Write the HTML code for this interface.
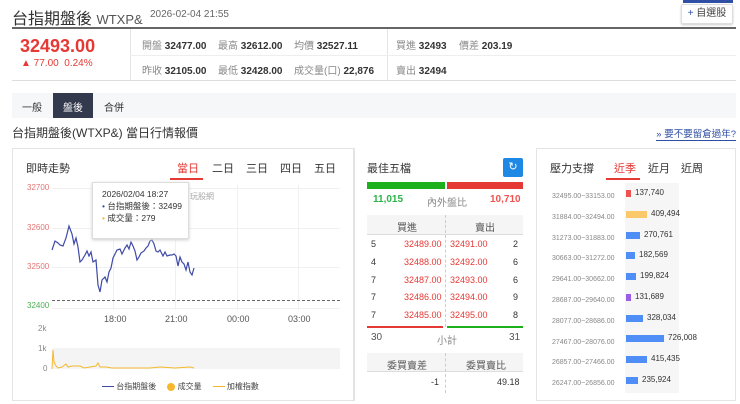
<!DOCTYPE html>
<html><head><meta charset="utf-8">
<style>
*{margin:0;padding:0;box-sizing:border-box}
body{width:740px;height:404px;background:#fff;font-family:"Liberation Sans","Noto Sans CJK TC",sans-serif;color:#333;position:relative;overflow:hidden;font-size:10px}
.a{position:absolute;white-space:nowrap}
.g{color:#888}
.b{font-weight:bold;color:#333}
.red{color:#e53935}
.grn{color:#2db34a}
</style></head><body>
<div class="a" style="left:12px;top:5px;font-size:16px;color:#333">台指期盤後 <span style="font-size:13px;color:#555">WTXP&amp;</span></div>
<div class="a g" style="left:150px;top:9px;font-size:10px;color:#666">2026-02-04 21:55</div>
<div class="a" style="left:683px;top:0;width:50px;height:3px;background:#2e4fa3"></div>
<div class="a" style="left:681px;top:4px;width:52px;height:20px;border:1px solid #ddd;border-radius:2px;box-shadow:0 1px 2px #ccc;font-size:10px;line-height:18px;text-align:center;color:#444"><span style="color:#2e4fa3">+</span> 自選股</div>
<div class="a" style="left:12px;top:27px;width:724px;height:2px;background:#666"></div>
<div class="a" style="left:12px;top:80px;width:724px;height:1px;background:#ddd"></div>
<div class="a" style="left:130px;top:29px;width:1px;height:51px;background:#e4e4e4"></div>
<div class="a" style="left:387px;top:29px;width:1px;height:51px;background:#e4e4e4"></div>
<div class="a" style="left:130px;top:55px;width:606px;height:1px;background:#eee"></div>
<div class="a red" style="left:20px;top:36px;font-size:18px;font-weight:bold">32493.00</div>
<div class="a red" style="left:21px;top:58px;font-size:10px">▲ 77.00&nbsp;&nbsp;0.24%</div>
<div class="a" style="left:142px;top:37px"><span class="g">開盤</span> <span class="b">32477.00</span></div>
<div class="a" style="left:218px;top:37px"><span class="g">最高</span> <span class="b">32612.00</span></div>
<div class="a" style="left:294px;top:37px"><span class="g">均價</span> <span class="b">32527.11</span></div>
<div class="a" style="left:142px;top:62px"><span class="g">昨收</span> <span class="b">32105.00</span></div>
<div class="a" style="left:218px;top:62px"><span class="g">最低</span> <span class="b">32428.00</span></div>
<div class="a" style="left:294px;top:62px"><span class="g">成交量(口)</span> <span class="b">22,876</span></div>
<div class="a" style="left:396px;top:37px"><span class="g">買進</span> <span class="b">32493</span></div>
<div class="a" style="left:459px;top:37px"><span class="g">價差</span> <span class="b">203.19</span></div>
<div class="a" style="left:396px;top:62px"><span class="g">賣出</span> <span class="b">32494</span></div>
<div class="a" style="left:12px;top:93px;width:724px;height:25px;background:#f6f7f9"></div>
<div class="a" style="left:53px;top:93px;width:40px;height:25px;background:#343a4e"></div>
<div class="a" style="left:22px;top:99px;color:#333">一般</div>
<div class="a" style="left:63px;top:99px;color:#fff">盤後</div>
<div class="a" style="left:104px;top:99px;color:#333">合併</div>
<div class="a" style="left:12px;top:124px;font-size:12px;color:#333">台指期盤後(WTXP&amp;) 當日行情報價</div>
<div class="a" style="right:4px;top:126px;font-size:9.5px;color:#2e4fa3;border-bottom:1px solid #2e4fa3">» 要不要留倉過年?</div>

<div class="a" style="left:12px;top:148px;width:342px;height:253px;border:1px solid #e4e4e4"></div>
<div class="a" style="left:354px;top:148px;width:1px;height:253px;background:#e4e4e4"></div>
<div class="a" style="left:536px;top:148px;width:200px;height:253px;border:1px solid #e4e4e4"></div>

<div class="a" style="left:26px;top:160px;font-size:11px;color:#333">即時走勢</div>
<div class="a red" style="left:177px;top:160px;font-size:11px">當日</div>
<div class="a" style="left:170px;top:178px;width:33px;height:2px;background:#e53935"></div>
<div class="a" style="left:212px;top:160px;font-size:11px;color:#333">二日</div>
<div class="a" style="left:246px;top:160px;font-size:11px;color:#333">三日</div>
<div class="a" style="left:280px;top:160px;font-size:11px;color:#333">四日</div>
<div class="a" style="left:314px;top:160px;font-size:11px;color:#333">五日</div>
<svg class="a" style="left:0;top:0" width="360" height="404">
<g stroke="#f0f0f0" stroke-width="1">
<line x1="52" y1="188.5" x2="340" y2="188.5"/><line x1="52" y1="228.5" x2="340" y2="228.5"/><line x1="52" y1="267.5" x2="340" y2="267.5"/><line x1="52" y1="308.5" x2="340" y2="308.5"/>
<line x1="113.5" y1="185" x2="113.5" y2="310"/><line x1="175.5" y1="185" x2="175.5" y2="310"/><line x1="237.5" y1="185" x2="237.5" y2="310"/><line x1="298.5" y1="185" x2="298.5" y2="310"/>
</g>
<rect x="52" y="348" width="288" height="21" fill="#f4f4f4"/>
<line x1="52" y1="300.5" x2="340" y2="300.5" stroke="#666" stroke-dasharray="3,2"/>
<polyline fill="none" stroke="#3f4aa8" stroke-width="1.2" points="52,250 55,241 58,243 60,245 63,246 66,238 69,226 72,234 74,244 76,238 78,247 80,262 82,260 85,255 87,251 89,256 91,252 93,262 96,260 98,285 100,292 102,280 105,277 107,282 109,272 111,268 113,258 115,254 117,250 120,249 122,254 125,248 127,245 129,249 131,242 133,246 135,251 137,260 139,257 141,253 144,251 146,248 148,246 150,241 152,240 154,244 156,251 158,252 160,250 163,256 165,252 167,256 170,255 172,255 174,254 176,256 178,266 180,257 182,262 184,264 186,270 188,262 190,272 192,275 194,268"/>
<polyline fill="none" stroke="#f5b82e" stroke-width="1" points="52,369 53,350 54,362 56,366 58,368 62,367 66,364 68,367 72,366 76,366 80,366 84,368 90,367 96,366 98,363 100,367 106,367 112,368 130,368 150,368 160,367 175,368 190,367 194,368"/>
</svg>
<div class="a" style="left:27px;top:183px;font-size:8px;color:#e57373">32700</div>
<div class="a" style="left:27px;top:223px;font-size:8px;color:#e57373">32600</div>
<div class="a" style="left:27px;top:262px;font-size:8px;color:#e57373">32500</div>
<div class="a" style="left:27px;top:301px;font-size:8px;color:#4caf50">32400</div>
<div class="a" style="left:104px;top:314px;font-size:9px;color:#555">18:00</div>
<div class="a" style="left:165px;top:314px;font-size:9px;color:#555">21:00</div>
<div class="a" style="left:227px;top:314px;font-size:9px;color:#555">00:00</div>
<div class="a" style="left:288px;top:314px;font-size:9px;color:#555">03:00</div>
<div class="a" style="left:38px;top:324px;font-size:8px;color:#888">2k</div>
<div class="a" style="left:38px;top:344px;font-size:8px;color:#888">1k</div>
<div class="a" style="left:43px;top:364px;font-size:8px;color:#888">0</div>
<div class="a" style="left:92px;top:182px;width:97px;height:57px;background:#fff;border:1px solid #ddd;box-shadow:0 1px 3px #ccc;font-size:8.5px;color:#333;padding:5px 0 0 9px;line-height:12px">2026/02/04 18:27<br><span style="color:#3f4aa8">•</span> 台指期盤後：32499<br><span style="color:#f5b82e">•</span> 成交量：279</div>
<div class="a" style="left:190px;top:191px;font-size:8px;color:#aaa">玩股網</div>
<div class="a" style="left:102px;top:381px;font-size:8px;color:#444"><span style="display:inline-block;width:12px;height:1px;background:#3f4aa8;vertical-align:middle"></span> 台指期盤後&nbsp;&nbsp;&nbsp;&nbsp;&nbsp;<span style="display:inline-block;width:8px;height:8px;border-radius:50%;background:#f5b82e;vertical-align:middle"></span> 成交量&nbsp;&nbsp;&nbsp;&nbsp;&nbsp;<span style="display:inline-block;width:12px;height:1px;background:#f5b82e;vertical-align:middle"></span> 加權指數</div>

<div class="a" style="left:367px;top:160px;font-size:11px;color:#333">最佳五檔</div>
<div class="a" style="left:503px;top:158px;width:20px;height:19px;background:#1e88e5;border-radius:2px;color:#fff;font-size:11px;text-align:center;line-height:19px">↻</div>
<div class="a" style="left:367px;top:182px;width:78px;height:7px;background:#1db01d"></div>
<div class="a" style="left:447px;top:182px;width:76px;height:7px;background:#e53935"></div>
<div class="a grn" style="left:373px;top:194px;font-size:10px;font-weight:bold">11,015</div>
<div class="a g" style="left:427px;top:194px;font-size:10px">內外盤比</div>
<div class="a red" style="left:490px;top:194px;font-size:10px;font-weight:bold;color:#ef5350">10,710</div>
<div class="a" style="left:367px;top:215px;width:156px;height:20px;background:#f5f5f5;border-bottom:1px solid #ddd"></div>
<div class="a" style="left:445px;top:215px;width:0;height:112px;border-left:1px dashed #ccc"></div>
<div class="a" style="left:397px;top:219px;font-size:10px;color:#555">買進</div>
<div class="a" style="left:475px;top:219px;font-size:10px;color:#555">賣出</div>
<div class="a" style="left:371px;top:236px;font-size:9px;line-height:17.8px;color:#333">5<br>4<br>7<br>7<br>7</div>
<div class="a red" style="left:404px;top:236px;font-size:9px;line-height:17.8px;text-align:right">32489.00<br>32488.00<br>32487.00<br>32486.00<br>32485.00</div>
<div class="a red" style="left:450px;top:236px;font-size:9px;line-height:17.8px">32491.00<br>32492.00<br>32493.00<br>32494.00<br>32495.00</div>
<div class="a" style="left:513px;top:236px;font-size:9px;line-height:17.8px;color:#333">2<br>6<br>6<br>9<br>8</div>
<div class="a" style="left:367px;top:326px;width:76px;height:2px;background:#e53935"></div>
<div class="a" style="left:447px;top:326px;width:76px;height:2px;background:#1db01d"></div>
<div class="a" style="left:371px;top:332px;font-size:10px;color:#555">30</div>
<div class="a" style="left:437px;top:332px;font-size:10px;color:#888">小計</div>
<div class="a" style="left:509px;top:332px;font-size:10px;color:#555">31</div>
<div class="a" style="left:367px;top:353px;width:156px;height:19px;background:#f5f5f5;border-bottom:1px solid #ddd"></div>
<div class="a" style="left:445px;top:353px;width:0;height:40px;border-left:1px dashed #ccc"></div>
<div class="a" style="left:387px;top:357px;font-size:10px;color:#555">委買賣差</div>
<div class="a" style="left:466px;top:357px;font-size:10px;color:#555">委買賣比</div>
<div class="a" style="left:431px;top:377px;font-size:9px;color:#333">-1</div>
<div class="a" style="left:497px;top:377px;font-size:9px;color:#333">49.18</div>

<div class="a" style="left:550px;top:160px;font-size:11px;color:#333">壓力支撐</div>
<div class="a red" style="left:614px;top:160px;font-size:11px">近季</div>
<div class="a" style="left:606px;top:178px;width:34px;height:2px;background:#e53935"></div>
<div class="a" style="left:648px;top:160px;font-size:11px;color:#333">近月</div>
<div class="a" style="left:681px;top:160px;font-size:11px;color:#333">近周</div>
<div class="a" style="left:625px;top:183px;width:54px;height:210px;background:#f6f6f6"></div>
<div class="a" style="left:552px;top:187px;font-size:7px;line-height:20.8px;color:#888">32495.00~33153.00<br>31884.00~32494.00<br>31273.00~31883.00<br>30663.00~31272.00<br>29641.00~30662.00<br>28687.00~29640.00<br>28077.00~28686.00<br>27467.00~28076.00<br>26857.00~27466.00<br>26247.00~26856.00</div>
<div class="a" style="left:626px;top:190px;width:5px;height:7px;background:#ef5350"></div><div class="a" style="left:635px;top:188px;font-size:8px">137,740</div>
<div class="a" style="left:626px;top:211px;width:21px;height:7px;background:#fbc96a"></div><div class="a" style="left:651px;top:209px;font-size:8px">409,494</div>
<div class="a" style="left:626px;top:232px;width:14px;height:7px;background:#4f8ef7"></div><div class="a" style="left:644px;top:230px;font-size:8px">270,761</div>
<div class="a" style="left:626px;top:252px;width:9px;height:7px;background:#4f8ef7"></div><div class="a" style="left:639px;top:250px;font-size:8px">182,569</div>
<div class="a" style="left:626px;top:273px;width:10px;height:7px;background:#4f8ef7"></div><div class="a" style="left:640px;top:271px;font-size:8px">199,824</div>
<div class="a" style="left:626px;top:294px;width:5px;height:7px;background:#9b5de5"></div><div class="a" style="left:635px;top:292px;font-size:8px">131,689</div>
<div class="a" style="left:626px;top:315px;width:17px;height:7px;background:#4f8ef7"></div><div class="a" style="left:647px;top:313px;font-size:8px">328,034</div>
<div class="a" style="left:626px;top:335px;width:38px;height:7px;background:#4f8ef7"></div><div class="a" style="left:668px;top:333px;font-size:8px">726,008</div>
<div class="a" style="left:626px;top:356px;width:21px;height:7px;background:#4f8ef7"></div><div class="a" style="left:651px;top:354px;font-size:8px">415,435</div>
<div class="a" style="left:626px;top:377px;width:12px;height:7px;background:#4f8ef7"></div><div class="a" style="left:642px;top:375px;font-size:8px">235,924</div>
</body></html>
